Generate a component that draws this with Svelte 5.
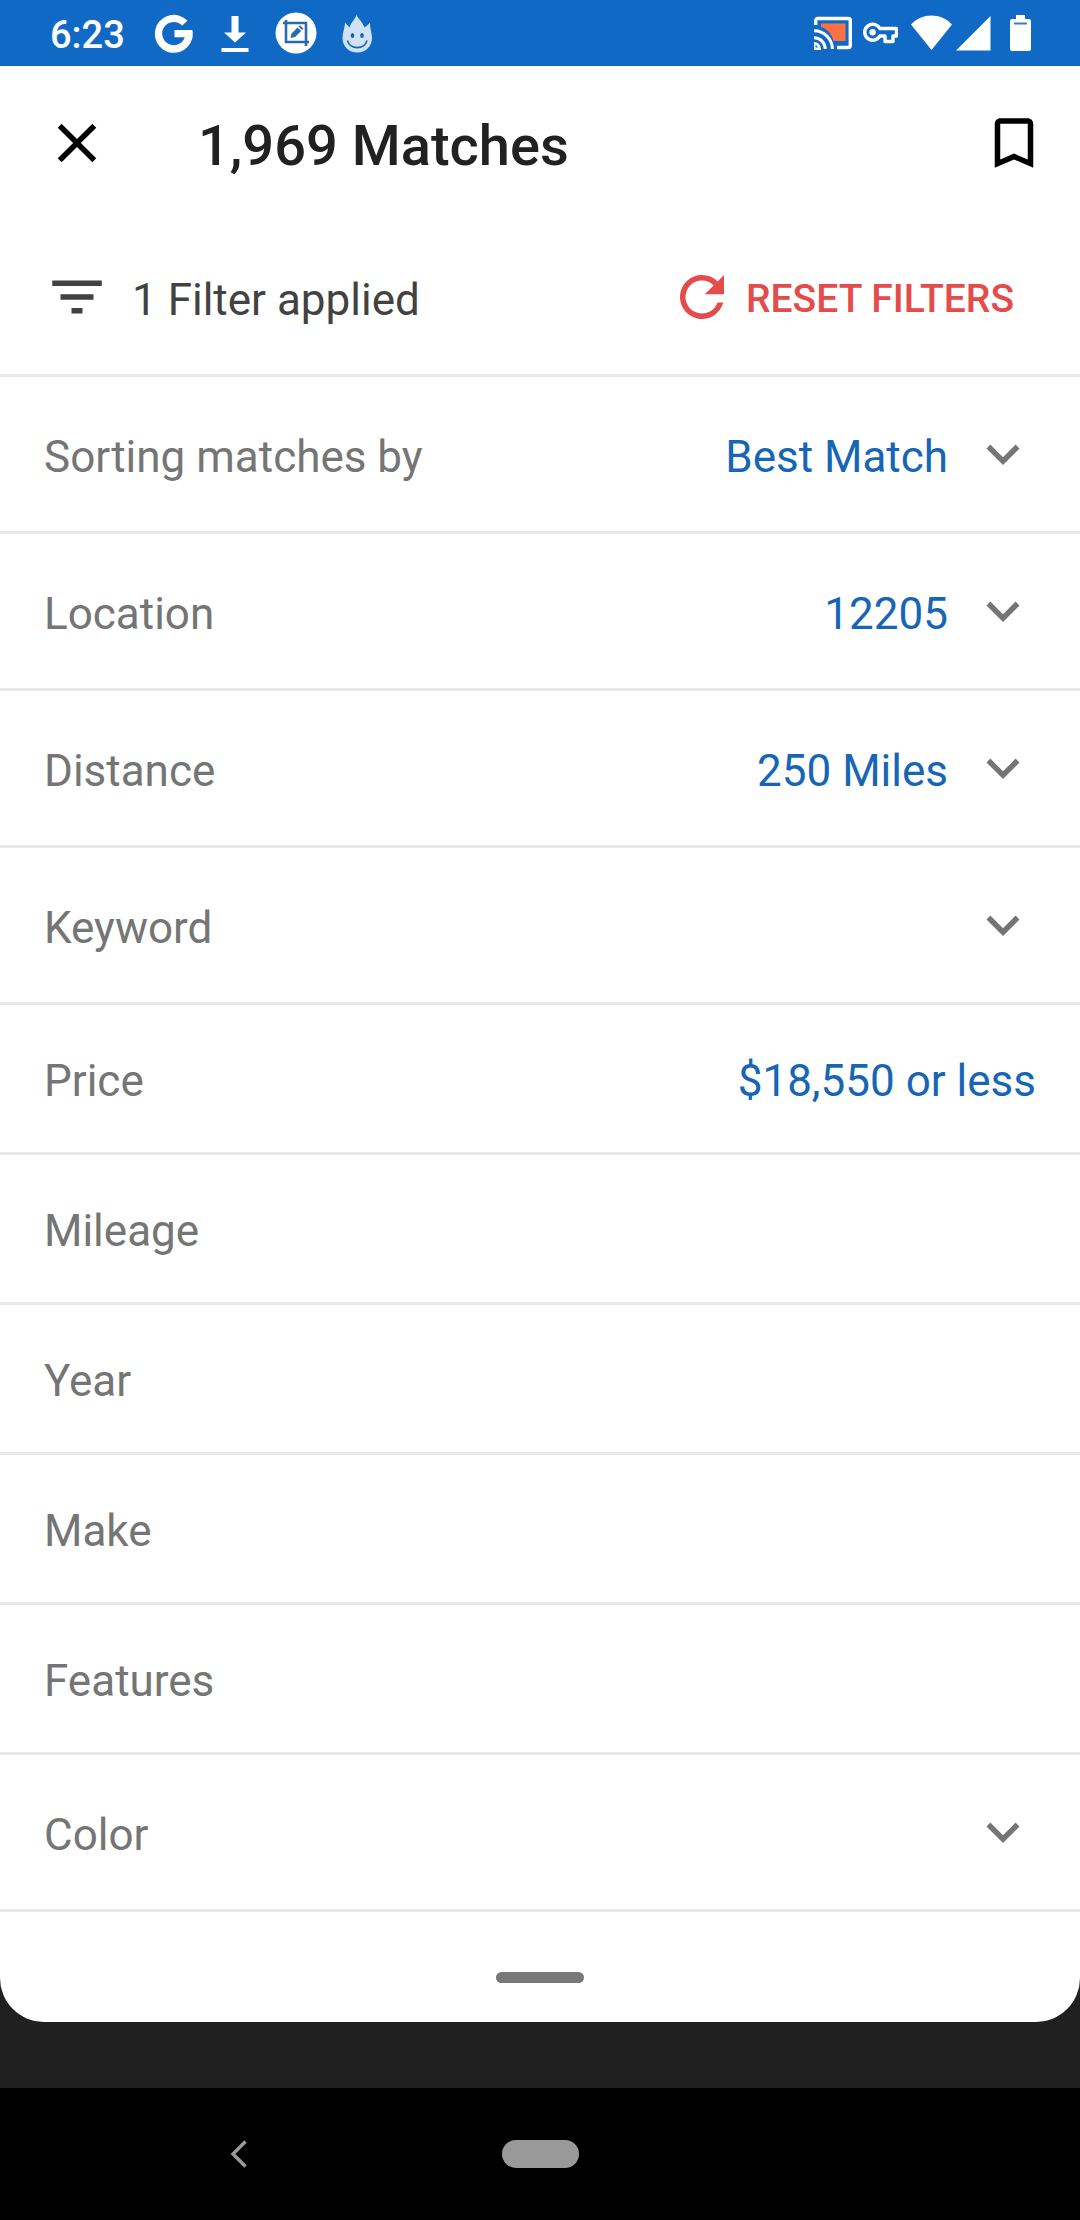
<script>
  const filters = [
    { label: 'Sorting matches by', value: 'Best Match', expandable: true },
    { label: 'Location', value: '12205', expandable: true },
    { label: 'Distance', value: '250 Miles', expandable: true },
    { label: 'Keyword', value: '', expandable: true },
    { label: 'Price', value: '$18,550 or less', expandable: false },
    { label: 'Mileage', value: '', expandable: false },
    { label: 'Year', value: '', expandable: false },
    { label: 'Make', value: '', expandable: false },
    { label: 'Features', value: '', expandable: false },
    { label: 'Color', value: '', expandable: true }
  ];
</script>

<div class="screen">
  <div class="status">
    <div class="notifications">
      <span class="time">6:23</span>
      <svg width="42" height="42" viewBox="0 0 42 42" aria-hidden="true">
        <path d="M34.500 8.700A19 19 0 1 0 39.400 18H21.500v7.200h10.300A11.600 11.600 0 1 1 29.200 13.600z" fill="#fff" />
      </svg>
      <svg width="42" height="42" viewBox="0 0 42 42" aria-hidden="true">
        <path d="M17.500 4h7v16.500H32L21 30.500 10 20.500h7.500zM7.500 36h27v4h-27z" fill="#fff" />
      </svg>
      <svg width="42" height="42" viewBox="0 0 42 42" aria-hidden="true">
        <circle cx="21" cy="21" r="20.500" fill="#fff" />
        <path d="M8 11h23v23M11 8v22h23" fill="none" stroke="#2a69b0" stroke-width="2.600" />
        <path d="M15.500 26l1-4.500 6-6 3.600 3.600-6 6zM23.600 14.500l1.400-1.300 3.500 3.500-1.400 1.300z" fill="#2a69b0" />
      </svg>
      <svg width="42" height="42" viewBox="0 0 42 42" aria-hidden="true">
        <path d="M20.500 2.500c1 4 5.500 6.500 8 13 1.500-1 3.500-2.500 5.500-5-.5 5 2 10 2 15.500C36 34.500 29.500 40.500 21.200 40.500S6.500 34.500 6.500 26c0-5.500 2.500-10.500 2.500-15.500 2 2 3.200 3.500 4.500 5 1.500-5.500 6-8.500 7-13z" fill="#cfe2f6" />
        <ellipse cx="16.500" cy="23.500" rx="1.800" ry="2.600" fill="#1b62ae" />
        <ellipse cx="26" cy="23.500" rx="1.800" ry="2.600" fill="#1b62ae" />
        <path d="M11.500 28.500c2 9.500 17.500 9.500 19.500 0" fill="none" stroke="#1b62ae" stroke-width="1.600" />
      </svg>
    </div>
    <div class="system">
      <svg width="38" height="34" viewBox="0 0 38 34" aria-hidden="true">
        <path d="M7 7.500h24.500v17.500H19.500C18 18 13 12.500 7 11z" fill="#ff7043" />
        <path d="M1.700 9V4.500a2 2 0 0 1 2-2h30.600a2 2 0 0 1 2 2v25a2 2 0 0 1-2 2H23" fill="none" stroke="#fff" stroke-width="3.400" />
        <path d="M0 27.500a5.500 5.500 0 0 1 5.500 5.500H0zM0 21.800a11.300 11.300 0 0 1 11.300 11.300M0 14.700a18.400 18.400 0 0 1 18.400 18.400" fill="none" stroke="#fff" stroke-width="3" />
      </svg>
      <svg class="key" width="35" height="22" viewBox="0 0 35 22" aria-hidden="true">
        <path d="M16.800 6.500H33.500V14H30v5.500h-8V14h-5.200a8 8 0 1 1 0-7.500z" fill="none" stroke="#fff" stroke-width="3.400" stroke-linejoin="round" />
        <circle cx="9.600" cy="10.200" r="3.200" fill="#fff" />
      </svg>
      <svg class="wifi" width="41" height="36" viewBox="0 0 41 36" aria-hidden="true">
        <path d="M0 9.500C11-2.500 30-2.500 41 9.500L20.500 35z" fill="#fff" />
      </svg>
      <svg width="35" height="36" viewBox="0 0 35 36" aria-hidden="true">
        <path d="M34.500 1v34.500H0z" fill="#fff" />
      </svg>
      <svg class="battery" width="21" height="36" viewBox="0 0 21 36" aria-hidden="true">
        <path d="M6 0h9v4h4a2 2 0 0 1 2 2v28a2 2 0 0 1-2 2H2a2 2 0 0 1-2-2V6a2 2 0 0 1 2-2h4z" fill="#fff" />
        <path d="M4 8.500h13" stroke="#3c7dc4" stroke-width="2" />
      </svg>
    </div>
  </div>

  <main class="sheet">
    <header class="bar title-bar">
      <button class="icon-button" aria-label="Close">
        <svg class="icon" viewBox="0 0 24 24" aria-hidden="true">
          <path d="M19 6.410 17.590 5 12 10.590 6.410 5 5 6.410 10.590 12 5 17.590 6.410 19 12 13.410 17.590 19 19 17.590 13.410 12z" />
        </svg>
      </button>
      <h1>1,969 Matches</h1>
      <button class="icon-button" aria-label="Save search">
        <svg class="icon" viewBox="0 0 24 24" aria-hidden="true">
          <path d="M17 3H7c-1.100 0-2 .9-2 2v16l7-3 7 3V5c0-1.100-.9-2-2-2zm0 15-5-2.180L7 18V5h10z" />
        </svg>
      </button>
    </header>

    <div class="bar summary">
      <svg class="icon" viewBox="0 0 24 24" aria-hidden="true">
        <path d="M10 18h4v-2h-4zM3 6v2h18V6zm3 7h12v-2H6z" />
      </svg>
      <span class="text applied">1 Filter applied</span>
      <button class="reset">
        <svg class="icon" viewBox="0 0 24 24" aria-hidden="true">
          <path d="M17.650 6.350A7.960 7.960 0 0 0 12 4a8 8 0 1 0 7.730 10h-2.080A6 6 0 1 1 12 6c1.660 0 3.140.69 4.220 1.780L13 11h7V4z" />
        </svg>
        <span>RESET FILTERS</span>
      </button>
    </div>

    <ul>
      {#each filters as filter}
        <li>
          <button class="row">
            <span class="text label">{filter.label}</span>
            {#if filter.value}<span class="text value">{filter.value}</span>{/if}
            {#if filter.expandable}
              <svg class="icon" viewBox="0 0 24 24" aria-hidden="true">
                <path d="M16.590 8.590 12 13.170 7.410 8.590 6 10l6 6 6-6z" />
              </svg>
            {/if}
          </button>
        </li>
      {/each}
    </ul>

    <div class="grip">
      <button class="handle" aria-label="Drag to close"></button>
    </div>
  </main>

  <nav>
    <button class="back" aria-label="Back">
      <svg width="18" height="28" viewBox="0 0 18 28" aria-hidden="true">
        <path d="M15.500 1.500 3 14l12.500 12.500" fill="none" stroke="#9a9a9a" stroke-width="3.400" />
      </svg>
    </button>
    <button class="home" aria-label="Home"></button>
  </nav>
</div>

<style>
  :global(body) {
    margin: 0;
    background: #202020;
  }

  .screen {
    display: flex;
    flex-direction: column;
    min-height: 100vh;
    font-family: Roboto, "Liberation Sans", sans-serif;
    background: #202020;
  }

  button {
    margin: 0;
    padding: 0;
    border: 0;
    background: none;
    font: inherit;
    color: inherit;
    cursor: pointer;
  }

  svg {
    display: block;
    flex: none;
  }

  .icon {
    width: 66px;
    height: 66px;
    fill: currentColor;
  }

  .status {
    display: flex;
    justify-content: space-between;
    align-items: center;
    height: 66px;
    padding: 0 49px 0 50px;
    background: #106ac5;
    color: #fff;
  }

  .notifications {
    display: flex;
    align-items: center;
    gap: 19px;
  }

  .time {
    min-width: 84px;
    font-size: 38px;
    line-height: 44px;
    font-weight: 500;
    padding-top: 4px;
  }

  .system {
    display: flex;
    align-items: center;
  }

  .key {
    margin-left: 11px;
  }

  .wifi {
    margin: 0 4px 0 13px;
  }

  .battery {
    margin-left: 19px;
  }

  .sheet {
    background: #fff;
    border-radius: 0 0 44px 44px;
  }

  .bar {
    display: flex;
    align-items: center;
    padding: 44px;
  }

  .title-bar {
    padding-right: 33px;
    color: #000;
  }

  h1 {
    flex: 1;
    margin: 0 0 0 88px;
    padding-top: 6px;
    font-size: 56px;
    line-height: 60px;
    font-weight: 500;
    color: #212121;
  }

  .summary {
    padding-right: 66px;
    border-bottom: 3px solid #e8e8e8;
    color: #424242;
  }

  .text {
    padding-top: 5px;
    font-size: 44px;
    line-height: 54px;
  }

  .applied {
    flex: 1;
    margin-left: 22px;
  }

  .reset {
    display: flex;
    align-items: center;
    gap: 11px;
    color: #e54b4b;
    font-size: 39px;
    line-height: 44px;
    font-weight: 500;
  }

  .reset span {
    padding-top: 4px;
  }

  ul {
    margin: 0;
    padding: 0;
    list-style: none;
  }

  li {
    border-bottom: 3px solid #e8e8e8;
  }

  .row {
    display: flex;
    align-items: center;
    gap: 22px;
    width: 100%;
    padding: 44px;
    color: #757575;
    text-align: left;
  }

  .label {
    flex: 1;
  }

  .value {
    color: #1766b5;
  }

  .grip {
    display: flex;
    justify-content: center;
    padding: 60px 0 39px;
  }

  .handle {
    width: 88px;
    height: 11px;
    border-radius: 6px;
    background: #787878;
  }

  nav {
    display: grid;
    grid-template-columns: 1fr 77px 1fr;
    align-items: center;
    height: 132px;
    margin-top: auto;
    background: #000;
  }

  .back {
    justify-self: center;
    padding: 24px 48px 24px 24px;
  }

  .home {
    height: 28px;
    border-radius: 14px;
    background: #999;
  }
</style>
